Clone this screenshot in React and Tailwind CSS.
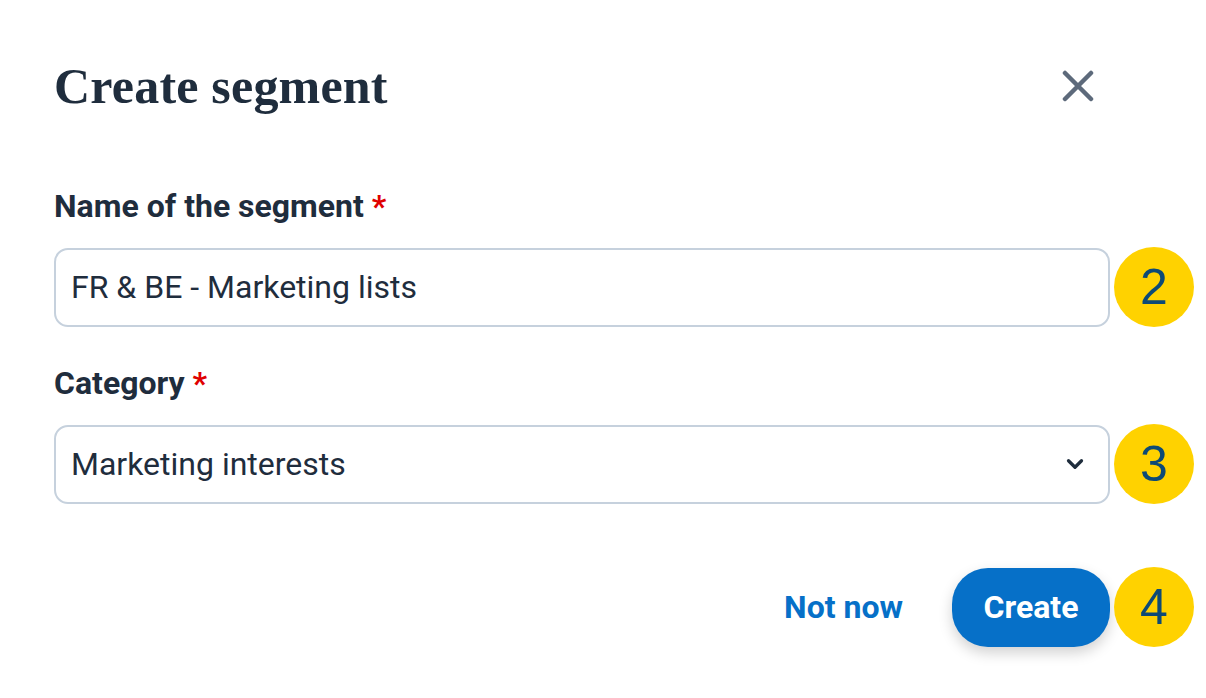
import React from 'react'
import { ChevronDown } from 'lucide-react'

const sans = { fontFamily: 'Roboto, "Liberation Sans", sans-serif' }

// Yellow step marker sitting to the right of a field
const StepBadge = ({ n }) => (
  <div className="flex h-[80px] w-[80px] shrink-0 items-center justify-center rounded-full bg-[#ffd200]">
    <span className="text-[50px] leading-none text-[#0d4a76] [font-family:'Liberation_Sans',Arial,sans-serif]">
      {n}
    </span>
  </div>
)

const FieldLabel = ({ children }) => (
  <label className="block text-[32px] font-bold leading-none text-[#1f2d3d]" style={sans}>
    {children} <span className="text-[#e00000]">*</span>
  </label>
)

export default function App() {
  return (
    <div className="h-[698px] w-[1206px] overflow-hidden bg-white pl-[54px] pt-[61px]" style={sans}>
      {/* Header */}
      <div className="flex w-[1056px] items-center justify-between pr-[16px]">
        <h1 className="text-[50px] font-bold leading-none tracking-[0.2px] text-[#1f2d3d] [font-family:'Liberation_Serif',Georgia,serif]">
          Create segment
        </h1>
        <button className="flex h-[32px] w-[32px] items-center justify-center">
          <svg width="32" height="32" viewBox="0 0 32 32" fill="none">
            <path d="M3 3L29 29M29 3L3 29" stroke="#5d6a7b" strokeWidth="4.5" strokeLinecap="round" />
          </svg>
        </button>
      </div>

      {/* Name */}
      <div className="mt-[79px]">
        <FieldLabel>Name of the segment</FieldLabel>
        <div className="mt-[25px] flex items-center gap-[4px]">
          <div className="flex h-[79px] w-[1056px] items-center rounded-[14px] border-2 border-[#c6d1dd] px-[15px] text-[32px] text-[#1f2d3d]">
            FR &amp; BE - Marketing lists
          </div>
          <StepBadge n="2" />
        </div>
      </div>

      {/* Category */}
      <div className="mt-[40px]">
        <FieldLabel>Category</FieldLabel>
        <div className="mt-[25px] flex items-center gap-[4px]">
          <div className="flex h-[79px] w-[1056px] items-center justify-between rounded-[14px] border-2 border-[#c6d1dd] pl-[15px] pr-[20px] text-[32px] text-[#1f2d3d]">
            <span>Marketing interests</span>
            <ChevronDown size={26} strokeWidth={3} color="#1f2d3d" />
          </div>
          <StepBadge n="3" />
        </div>
      </div>

      {/* Actions */}
      <div className="mt-[63px] flex items-center gap-[4px]">
        <div className="flex w-[1056px] items-center justify-end gap-[49px]">
          <button className="text-[32px] font-bold text-[#0670c8]">Not now</button>
          <button className="h-[79px] w-[158px] rounded-[36px] bg-[#0670c8] text-[32px] font-bold text-white shadow-[0_6px_14px_rgba(0,0,0,0.18)]">
            Create
          </button>
        </div>
        <StepBadge n="4" />
      </div>
    </div>
  )
}
